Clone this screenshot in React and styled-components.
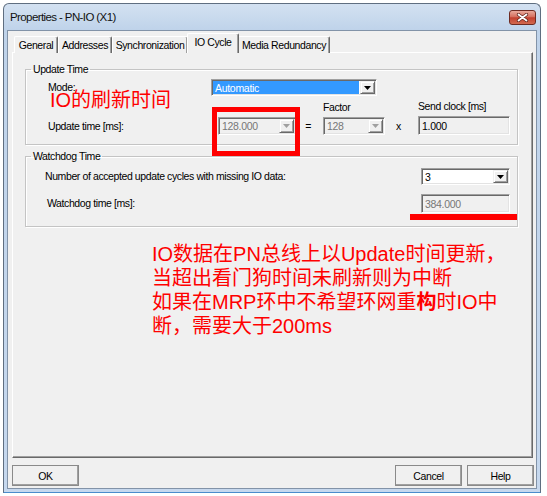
import React from 'react';
import styled, { createGlobalStyle } from 'styled-components';

const GlobalStyle = createGlobalStyle`
  html, body { margin: 0; padding: 0; background: #fff; }
  body { font-family: "Liberation Sans", Arial, sans-serif; }
`;

const Window = styled.div`
  margin: 3px 0 0 3px;
  width: 538px;
  height: 490px;
  box-sizing: border-box;
  border: 1px solid #5f6e80;
  border-bottom-color: #4a8ccc;
  border-radius: 6px 6px 0 0;
  background: linear-gradient(#d3e1f1, #bfd3ea 26px, #c6d8ee);
  display: flex;
  flex-direction: column;
`;

const TitleBar = styled.div`
  height: 26px;
  display: flex;
  align-items: center;
  justify-content: space-between;
  padding: 0 4px 0 6px;
`;

const Title = styled.span`
  font-size: 11.5px;
  letter-spacing: -0.6px;
  color: #111;
`;

const CloseButton = styled.div`
  width: 27px;
  height: 15px;
  box-sizing: border-box;
  border: 1px solid #6e2b22;
  border-radius: 3px;
  background: linear-gradient(#e9a99b, #d5705f 45%, #c2402f 52%, #d26a4f);
  display: flex;
  align-items: center;
  justify-content: center;
`;

const Client = styled.div`
  flex: 1;
  margin: 0 3px 3px 3px;
  border: 1px solid #8293a8;
  background: #f0f0f0;
  padding: 2px 3px 2px 4px;
  display: flex;
  flex-direction: column;
`;

const TabRow = styled.div`
  height: 20px;
  display: flex;
  align-items: flex-end;
  padding-left: 2px;
  margin-bottom: -1px;
  position: relative;
  z-index: 1;
`;

const Tab = styled.div`
  width: ${p => p.$w}px;
  height: ${p => (p.$active ? 20 : 17)}px;
  box-sizing: border-box;
  margin: 0 ${p => (p.$active ? -1 : 0)}px;
  background: #f0f0f0;
  border-top: 1px solid #fff;
  border-left: 1px solid #fff;
  border-right: 1px solid #696969;
  box-shadow: inset -1px 0 #a0a0a0;
  border-radius: 2px 2px 0 0;
  font-size: 10.5px;
  letter-spacing: -0.4px;
  color: #000;
  display: flex;
  align-items: center;
  justify-content: center;
  padding-bottom: ${p => (p.$active ? 3 : 0)}px;
  z-index: ${p => (p.$active ? 2 : 0)};
`;

const Panel = styled.div`
  position: relative;
  height: 406px;
  box-sizing: border-box;
  border: 1px solid;
  border-color: #fff #696969 #696969 #fff;
  box-shadow: inset -1px -1px #a0a0a0;
  padding: 10px 14px 0 12px;
  display: flex;
  flex-direction: column;
`;

const Group = styled.fieldset`
  margin: 0 0 ${p => p.$mb || 0}px 0;
  padding: 0 0 ${p => p.$pb}px 0;
  border: 1px solid #c4c4c4;
  box-shadow: inset 1px 1px #fff, 1px 1px #fff;
  min-width: 0;
`;

const Legend = styled.legend`
  margin-left: 5px;
  padding: 0 2px;
  font-size: 10.5px;
  letter-spacing: -0.4px;
  line-height: 13px;
  color: #000;
`;

const Row = styled.div`
  display: flex;
  align-items: ${p => p.$align || 'center'};
  justify-content: ${p => p.$justify || 'flex-start'};
  margin-top: ${p => p.$mt}px;
  padding: 0 ${p => p.$pr || 0}px 0 ${p => p.$pl}px;
`;

const Label = styled.span`
  width: ${p => (p.$w ? `${p.$w}px` : 'auto')};
  height: ${p => p.$h || 13}px;
  line-height: ${p => p.$h || 13}px;
  margin-left: ${p => p.$ml || 0}px;
  flex-shrink: 0;
  font-size: 10.5px;
  letter-spacing: -0.4px;
  color: #000;
  white-space: nowrap;
  text-align: ${p => p.$center ? 'center' : 'left'};
  box-sizing: border-box;
  padding-right: ${p => p.$pr || 0}px;
`;

const Column = styled.div`
  display: flex;
  flex-direction: column;
  gap: 3px;
`;

const Sunken = styled.div`
  width: ${p => p.$w}px;
  height: ${p => p.$h}px;
  box-sizing: border-box;
  border: 1px solid;
  border-color: #a0a0a0 #fff #fff #a0a0a0;
  box-shadow: inset 1px 1px #696969, inset -1px -1px #e3e3e3;
  padding: 1px;
  display: flex;
  background: ${p => (p.$bg === 'white' ? '#fff' : '#f0f0f0')};
  flex-shrink: 0;
`;

const FieldText = styled.div`
  flex: 1;
  display: flex;
  align-items: center;
  padding-left: 2px;
  font-size: 10.5px;
  letter-spacing: -0.3px;
  color: ${p => (p.$state === 'selected' ? '#fff' : p.$state === 'disabled' ? '#777' : '#000')};
  background: ${p => (p.$state === 'selected' ? '#3399ff' : 'transparent')};
  margin-right: ${p => (p.$state === 'selected' ? 1 : 0)}px;
`;

const ArrowButton = styled.div`
  width: 15px;
  box-sizing: border-box;
  background: #f0f0f0;
  border: 1px solid;
  border-color: #f0f0f0 #696969 #696969 #f0f0f0;
  box-shadow: inset 1px 1px #fff, inset -1px -1px #a0a0a0;
  display: flex;
  align-items: center;
  justify-content: center;
`;

const Annotation = styled.div`
  position: absolute;
  left: 37px;
  top: 36px;
  font-size: 20px;
  line-height: 22px;
  color: #ff0000;
  font-family: "Liberation Sans", "Noto Sans CJK SC", sans-serif;
  white-space: nowrap;
`;

const RedBox = styled.div`
  position: absolute;
  left: 199px;
  top: 54px;
  width: 88px;
  height: 49px;
  box-sizing: border-box;
  border: 5px solid #ff0000;
`;

const RedLine = styled.div`
  position: absolute;
  left: 397px;
  top: 161px;
  width: 107px;
  height: 6px;
  background: #ff0000;
`;

const Note = styled.div`
  margin: 15px 0 0 127px;
  font-family: "Liberation Sans", "Noto Sans CJK SC", sans-serif;
  font-size: 20px;
  line-height: 24px;
  color: #ff0000;
`;

const NoteLine = styled.div`
  white-space: nowrap;
`;

const ButtonRow = styled.div`
  margin-top: 7px;
  display: flex;
  justify-content: space-between;
  width: 522px;
`;

const ButtonGroup = styled.div`
  display: flex;
  gap: 5px;
`;

const Button = styled.div`
  width: 67px;
  height: 21px;
  box-sizing: border-box;
  border: 1px solid;
  border-color: #fff #696969 #696969 #fff;
  box-shadow: inset -1px -1px #a0a0a0;
  outline: 1px solid #8a8a8a;
  outline-offset: -1px;
  background: #f0f0f0;
  display: flex;
  align-items: center;
  justify-content: center;
  font-size: 10.5px;
  letter-spacing: -0.4px;
  color: #000;
`;

const Arrow = ({ color = '#000' }) => (
  <svg width="7" height="4" viewBox="0 0 7 4">
    <path d="M0 0h7L3.5 4z" fill={color} />
  </svg>
);

const Combo = ({ value, w, h, state }) => (
  <Sunken $w={w} $h={h} $bg={state === 'disabled' ? 'gray' : 'white'}>
    <FieldText $state={state}>{value}</FieldText>
    <ArrowButton>
      <Arrow color={state === 'disabled' ? '#a0a0a0' : '#000'} />
    </ArrowButton>
  </Sunken>
);

const TextBox = ({ value, w, h, disabled }) => (
  <Sunken $w={w} $h={h} $bg="gray">
    <FieldText $state={disabled ? 'disabled' : 'normal'}>{value}</FieldText>
  </Sunken>
);

const tabs = [
  { label: 'General', w: 44 },
  { label: 'Addresses', w: 54 },
  { label: 'Synchronization', w: 76 },
  { label: 'IO Cycle', w: 52, active: true },
  { label: 'Media Redundancy', w: 92 },
];

export default function App() {
  return (
    <>
      <GlobalStyle />
      <Window>
        <TitleBar>
          <Title>Properties - PN-IO (X1)</Title>
          <CloseButton>
            <svg width="13" height="9" viewBox="0 0 13 9">
              <path d="M2.5 1.5l8 6M10.5 1.5l-8 6" stroke="#5a2018" strokeWidth="3.2" strokeLinecap="round" />
              <path d="M2.5 1.5l8 6M10.5 1.5l-8 6" stroke="#fff" strokeWidth="1.8" strokeLinecap="round" />
            </svg>
          </CloseButton>
        </TitleBar>
        <Client>
          <TabRow>
            {tabs.map(t => (
              <Tab key={t.label} $w={t.w} $active={t.active}>{t.label}</Tab>
            ))}
          </TabRow>
          <Panel>
            <Group $pb={9} $mb={5}>
              <Legend>Update Time</Legend>
              <Row $mt={3} $pl={22}>
                <Label $w={163}>Mode:</Label>
                <Combo value="Automatic" w={166} h={17} state="selected" />
              </Row>
              <Row $mt={4} $pl={22} $align="flex-end">
                <Label $w={170} $h={18}>Update time [ms]:</Label>
                <Combo value="128.000" w={78} h={18} state="disabled" />
                <Label $w={27} $h={18} $center $pr={3}>=</Label>
                <Column>
                  <Label>Factor</Label>
                  <Combo value="128" w={62} h={18} state="disabled" />
                </Column>
                <Label $w={33} $h={18} $center $pr={6}>x</Label>
                <Column>
                  <Label>Send clock [ms]</Label>
                  <TextBox value="1.000" w={92} h={19} />
                </Column>
              </Row>
            </Group>
            <Group $pb={13}>
              <Legend>Watchdog Time</Legend>
              <Row $mt={5} $pl={19} $pr={7} $justify="space-between">
                <Label>Number of accepted update cycles with missing IO data:</Label>
                <Combo value="3" w={89} h={17} state="normal" />
              </Row>
              <Row $mt={9} $pl={19} $pr={7} $justify="space-between">
                <Label $ml={2}>Watchdog time [ms]:</Label>
                <TextBox value="384.000" w={89} h={19} disabled />
              </Row>
            </Group>
            <Note>
              <NoteLine>IO数据在PN总线上以Update时间更新，</NoteLine>
              <NoteLine>当超出看门狗时间未刷新则为中断</NoteLine>
              <NoteLine>如果在MRP环中不希望环网重<b>构</b>时IO中</NoteLine>
              <NoteLine>断，需要大于200ms</NoteLine>
            </Note>
            <Annotation>IO的刷新时间</Annotation>
            <RedBox />
            <RedLine />
          </Panel>
          <ButtonRow>
            <Button>OK</Button>
            <ButtonGroup>
              <Button>Cancel</Button>
              <Button>Help</Button>
            </ButtonGroup>
          </ButtonRow>
        </Client>
      </Window>
    </>
  );
}
